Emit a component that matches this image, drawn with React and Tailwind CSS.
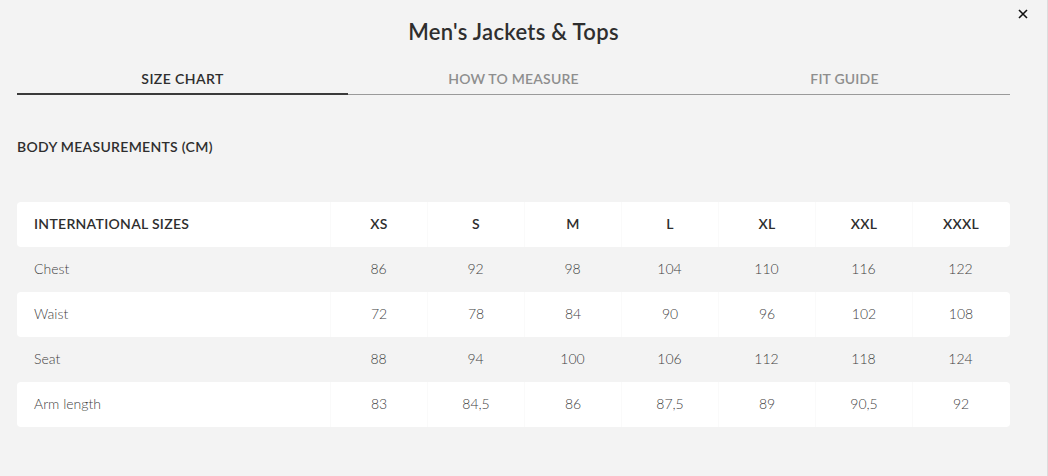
import React from "react";

const sizes = ["XS", "S", "M", "L", "XL", "XXL", "XXXL"];
const rows = [
  ["Chest", ["86", "92", "98", "104", "110", "116", "122"]],
  ["Waist", ["72", "78", "84", "90", "96", "102", "108"]],
  ["Seat", ["88", "94", "100", "106", "112", "118", "124"]],
  ["Arm length", ["83", "84,5", "86", "87,5", "89", "90,5", "92"]],
];

export default function App() {
  return (
    <div
      className="w-[1048px] h-[476px] bg-[#f3f3f3] relative overflow-hidden border-r border-[#dcdcdc]"
      style={{ fontFamily: "Lato, 'Open Sans', sans-serif" }}
    >
      <button className="absolute right-[19px] top-[6px] text-[#111] text-[18px] leading-none">
        <svg width="10" height="10" viewBox="0 0 10 10" className="mt-[3px]">
          <path d="M1 1L9 9M9 1L1 9" stroke="#111" strokeWidth="1.6" />
        </svg>
      </button>
      <div className="px-[17px] w-[1027px]">
        <h1 className="pt-[19px] text-center text-[22px] font-semibold text-[#2e2e2e] tracking-[0.3px] leading-[26px]">
          Men's Jackets &amp; Tops
        </h1>
        <div className="mt-[20px] flex">
          <div className="flex-1 h-[30px] pb-[2px] flex items-center justify-center text-[14px] font-semibold tracking-[0.4px] text-[#2e2e2e] border-b-2 border-[#3a3a3a]">
            SIZE CHART
          </div>
          <div className="flex-1 h-[30px] pb-[3px] flex items-center justify-center text-[14px] font-semibold tracking-[0.2px] text-[#8e8e8e] border-b border-[#9a9a9a]">
            HOW TO MEASURE
          </div>
          <div className="flex-1 h-[30px] pb-[3px] flex items-center justify-center text-[14px] font-semibold tracking-[0.2px] text-[#8e8e8e] border-b border-[#9a9a9a]">
            FIT GUIDE
          </div>
        </div>
        <h2 className="mt-[42px] text-[14px] font-semibold tracking-[0.3px] text-[#2e2e2e] leading-[20px]">
          BODY MEASUREMENTS (CM)
        </h2>
        <div className="mt-[45px] flex flex-col">
          <div className="flex h-[45px] bg-white rounded-[4px] items-center">
            <div className="w-[313px] pl-[17px] pb-[2px] text-[14px] font-semibold tracking-[0.3px] text-[#2e2e2e]">
              INTERNATIONAL SIZES
            </div>
            {sizes.map((s) => (
              <div
                key={s}
                className="w-[97px] h-full pb-[2px] flex items-center justify-center text-[14px] font-semibold tracking-[0.3px] text-[#2e2e2e] border-l border-[#fafafa]"
              >
                {s}
              </div>
            ))}
          </div>
          {rows.map(([label, vals], i) => (
            <div
              key={label}
              className={
                "flex h-[45px] items-center rounded-[4px] " +
                (i % 2 === 1 ? "bg-white" : "bg-transparent")
              }
            >
              <div className="w-[313px] pl-[17px] pb-[2px] text-[14px] font-light text-[#3f3f3f]">
                {label}
              </div>
              {vals.map((v, j) => (
                <div
                  key={j}
                  className={
                    "w-[97px] h-full pb-[2px] flex items-center justify-center text-[14px] font-light text-[#3f3f3f] " +
                    (i % 2 === 1 ? "border-l border-[#fafafa]" : "")
                  }
                >
                  {v}
                </div>
              ))}
            </div>
          ))}
        </div>
      </div>
    </div>
  );
}
